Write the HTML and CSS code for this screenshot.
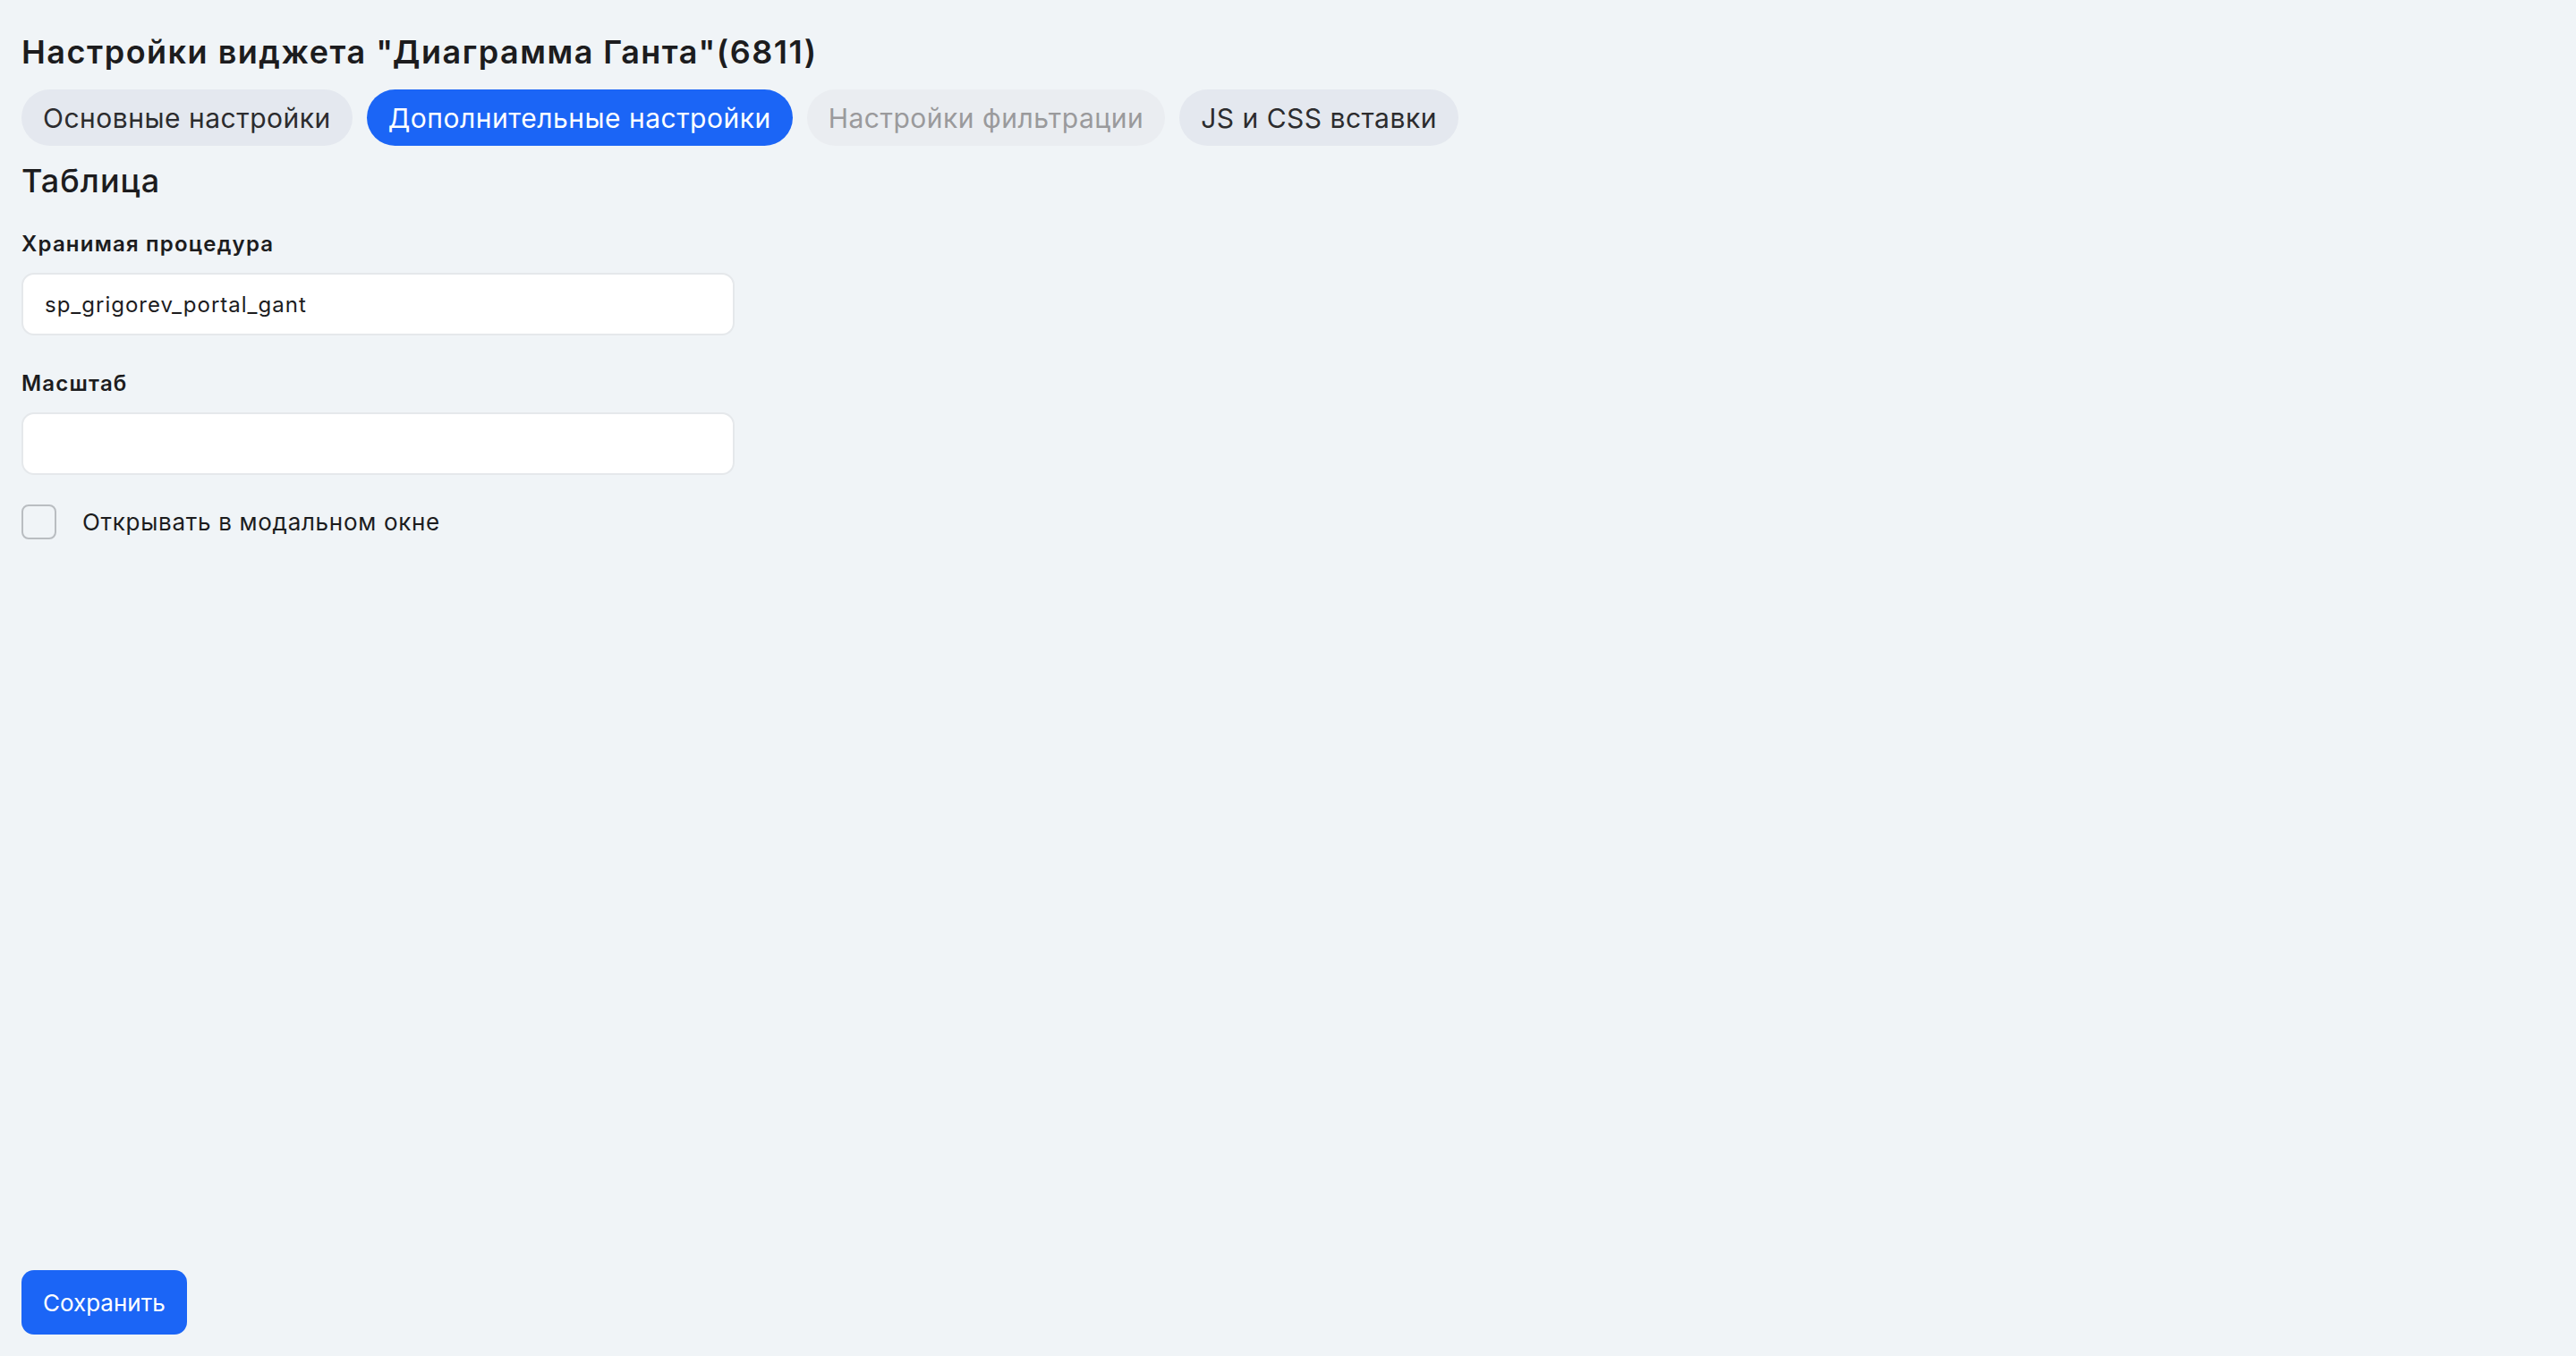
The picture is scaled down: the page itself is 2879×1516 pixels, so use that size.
FILE: index.html
```html
<!DOCTYPE html>
<html lang="ru">
<head>
    <meta charset="UTF-8">
    <meta name="viewport" content="width=device-width, initial-scale=1.0">
    <title>Настройки виджета</title>
    <link rel="stylesheet" href="styles.css">
</head>
<body>
    <div class="page">
        <h1 class="page-title">Настройки виджета "Диаграмма Ганта"(6811)</h1>

        <div class="tabs">
            <button class="tab">Основные настройки</button>
            <button class="tab active">Дополнительные настройки</button>
            <button class="tab disabled">Настройки фильтрации</button>
            <button class="tab">JS и CSS вставки</button>
        </div>

        <h2 class="section-title">Таблица</h2>

        <form class="settings-form">
            <div class="field">
                <label class="field-label" for="procedure">Хранимая процедура</label>
                <input class="field-input" type="text" id="procedure" value="sp_grigorev_portal_gant">
            </div>
            <div class="field">
                <label class="field-label" for="scale">Масштаб</label>
                <input class="field-input" type="text" id="scale">
            </div>
            <label class="check">
                <span class="check-box"></span>
                <span class="check-text">Открывать в модальном окне</span>
            </label>
        </form>

        <div class="footer">
            <button class="save-btn">Сохранить</button>
        </div>
    </div>
</body>
</html>
```

FILE: styles.css
```css
html, body {
    margin: 0;
    height: 100%;
}
body {
    font-family: Inter, "Noto Sans", sans-serif;
    background-color: #f0f4f7;
    color: #1c1c1e;
}
.page {
    min-height: 100%;
    box-sizing: border-box;
    padding: 36px 24px 24px 24px;
    display: flex;
    flex-direction: column;
}
.page-title {
    margin: 0;
    font-size: 36px;
    font-weight: 600;
    line-height: 44px;
    letter-spacing: 1.5px;
}
.tabs {
    display: flex;
    gap: 16px;
    margin-top: 20px;
}
.tab {
    height: 63px;
    padding: 0 24px;
    border: none;
    border-radius: 32px;
    background-color: #e4e8ef;
    color: #2c2c2e;
    font-family: inherit;
    font-size: 30px;
    letter-spacing: 0.5px;
    cursor: pointer;
}
.tab.active {
    background-color: #1b65f6;
    color: #fff;
}
.tab.disabled {
    background-color: #eaedf1;
    color: #9a9a9c;
    cursor: default;
}
.section-title {
    margin: 17px 0 0 0;
    font-size: 36px;
    font-weight: 500;
    line-height: 44px;
    letter-spacing: 1px;
}
.settings-form {
    margin-top: 35px;
    width: 797px;
}
.field {
    margin-bottom: 40px;
}
.field-label {
    display: block;
    font-size: 24px;
    font-weight: 600;
    line-height: 28px;
    letter-spacing: 1.2px;
    margin-bottom: 18px;
}
.field-input {
    display: block;
    width: 100%;
    height: 70px;
    box-sizing: border-box;
    padding: 0 24px;
    border: 2px solid #e5e8eb;
    border-radius: 14px;
    background-color: #fff;
    font-family: inherit;
    font-size: 24px;
    letter-spacing: 1px;
    color: #1c1c1e;
    outline: none;
}
.check {
    display: flex;
    align-items: center;
    gap: 29px;
    margin-top: -7px;
    cursor: pointer;
}
.check-box {
    width: 39px;
    height: 39px;
    box-sizing: border-box;
    border: 2px solid #b9bdc1;
    border-radius: 8px;
}
.check-text {
    font-size: 26px;
    letter-spacing: 0.7px;
}
.footer {
    margin-top: auto;
}
.save-btn {
    height: 72px;
    padding: 0 24px;
    border: none;
    border-radius: 14px;
    background-color: #1b65f6;
    color: #fff;
    font-family: Inter, sans-serif;
    font-size: 26px;
    cursor: pointer;
}
```
